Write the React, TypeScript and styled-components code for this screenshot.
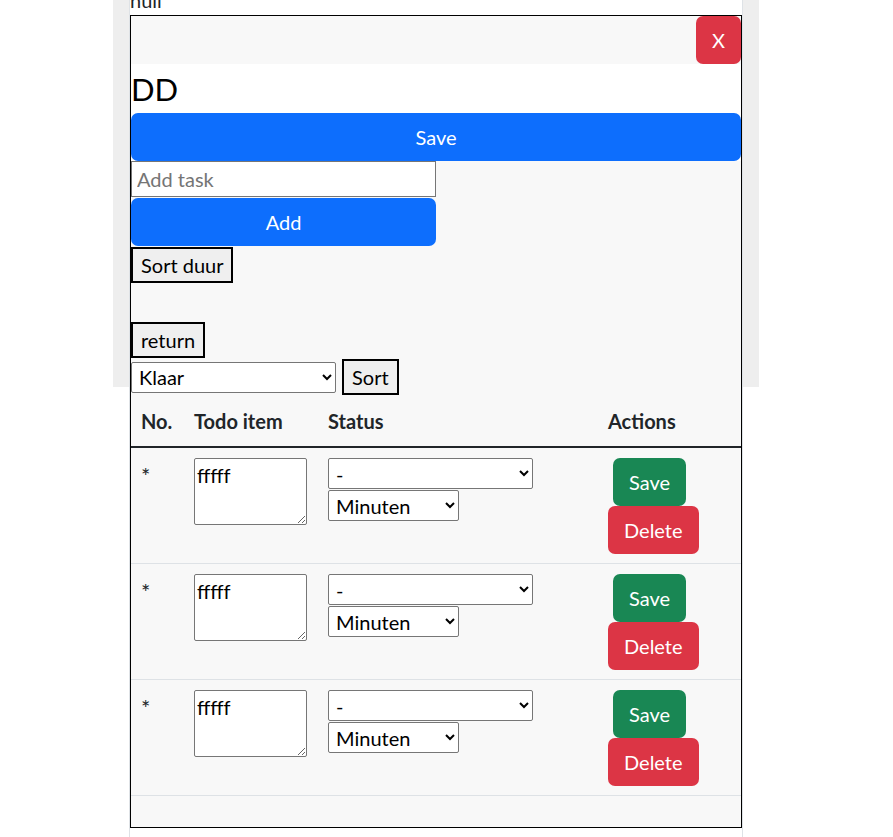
import styled, { createGlobalStyle } from 'styled-components';

const GlobalStyle = createGlobalStyle`
  html, body {
    margin: 0;
    padding: 0;
    background: #fff;
  }
  body {
    font-family: Lato, "Segoe UI", "Noto Sans", sans-serif;
    font-size: 20px;
    line-height: 1.5;
    color: #212529;
  }
`;

// grey page strip only reaches part way down; the card keeps going below it
const Backdrop = styled.div`
  margin: -15px 0 0 113px;
  width: 646px;
  box-sizing: border-box;
  padding: 0 16px;
  background: linear-gradient(#eeeeee, #eeeeee) top left / 100% 402px no-repeat;
`;

const Card = styled.div`
  background: #fff;
  border-left: 1px solid #dee2e6;
  border-right: 1px solid #dee2e6;
`;

const NullText = styled.div`
  height: 30px;
  line-height: 30px;
`;

const Modal = styled.div`
  border: 1px solid #000;
`;

const Header = styled.div`
  display: flex;
  justify-content: flex-end;
  background: #f8f8f8;
`;

const Btn = styled.button<{ $tone: 'primary' | 'success' | 'danger'; $width?: string }>`
  display: block;
  box-sizing: border-box;
  width: ${(p) => p.$width || 'auto'};
  height: 48px;
  padding: 0 15px;
  border: 1px solid transparent;
  border-radius: 7px;
  font: inherit;
  line-height: 30px;
  color: #fff;
  cursor: pointer;
  background: ${(p) =>
    p.$tone === 'primary' ? '#0d6efd' : p.$tone === 'success' ? '#198754' : '#dc3545'};
`;

const TitleBlock = styled.div`
  background: #fff;
`;

const Title = styled.h3`
  margin: 0 0 6px;
  padding-top: 8px;
  font-size: 31px;
  font-weight: 400;
  line-height: 35px;
  color: #000;
`;

const Body = styled.div`
  background: #f8f8f8;
  padding-bottom: 31px;
`;

const TaskInput = styled.input`
  display: block;
  box-sizing: border-box;
  width: 305px;
  height: 36px;
  margin: 0;
  padding: 1px 5px;
  border: 1px solid #767676;
  font: inherit;
  background: #fff;
  &::placeholder {
    color: #757575;
  }
`;

const Spaced = styled.div<{ $top: number }>`
  margin-top: ${(p) => p.$top}px;
`;

const PlainButton = styled.button`
  box-sizing: border-box;
  height: 36px;
  padding: 0 8px;
  border: 2px solid #000;
  background: #efefef;
  color: #000;
  font: inherit;
  line-height: 30px;
`;

const FilterRow = styled.div`
  display: flex;
  align-items: center;
  gap: 6px;
  height: 38px;
`;

const NativeSelect = styled.select<{ $w: number }>`
  display: block;
  box-sizing: border-box;
  width: ${(p) => p.$w}px;
  height: 31px;
  padding: 0 3px;
  border: 1px solid #767676;
  border-radius: 2px;
  background: #fff;
  color: #000;
  font: inherit;
`;

const Table = styled.table`
  width: 100%;
  border-collapse: collapse;
  table-layout: fixed;
  color: #212529;
`;

const Th = styled.th<{ $w?: number }>`
  width: ${(p) => (p.$w ? `${p.$w}px` : 'auto')};
  box-sizing: border-box;
  padding: 10px;
  text-align: left;
  font-weight: 700;
  line-height: 30px;
  border-bottom: 2px solid #212529;
`;

const Td = styled.td`
  padding: 10px 10px 9px;
  vertical-align: top;
  line-height: 30px;
  border-bottom: 1px solid #dee2e6;
`;

const Star = styled.span`
  display: inline-block;
  padding-top: 3px;
  font-size: 22px;
`;

const Note = styled.textarea`
  display: block;
  box-sizing: border-box;
  width: 113px;
  height: 67px;
  padding: 3px 2px;
  border: 1px solid #767676;
  border-radius: 2px;
  font: inherit;
  line-height: 1.3;
  color: #000;
  background: #fff;
`;

const Stack = styled.div`
  display: flex;
  flex-direction: column;
  gap: 1px;
`;

const ActionCol = styled.div`
  display: flex;
  flex-direction: column;
  align-items: flex-start;
`;

const SaveSmall = styled(Btn)`
  margin-left: 5px;
`;

const rows = [1, 2, 3];

export default function App() {
  return (
    <>
      <GlobalStyle />
      <Backdrop>
        <Card>
          <NullText>null</NullText>
          <Modal>
            <Header>
              <Btn $tone="danger">X</Btn>
            </Header>
            <TitleBlock>
              <Title>DD</Title>
              <Btn $tone="primary" $width="100%">Save</Btn>
            </TitleBlock>
            <Body>
              <TaskInput placeholder="Add task" />
              <Spaced $top={1}>
                <Btn $tone="primary" $width="305px">Add</Btn>
              </Spaced>
              <Spaced $top={1}>
                <PlainButton>Sort duur</PlainButton>
              </Spaced>
              <Spaced $top={39}>
                <PlainButton>return</PlainButton>
              </Spaced>
              <FilterRow>
                <NativeSelect $w={205} defaultValue="Klaar">
                  <option>Klaar</option>
                  <option>Bezig</option>
                  <option>Niet begonnen</option>
                </NativeSelect>
                <PlainButton>Sort</PlainButton>
              </FilterRow>
              <Table>
                <thead>
                  <tr>
                    <Th $w={53}>No.</Th>
                    <Th $w={134}>Todo item</Th>
                    <Th $w={280}>Status</Th>
                    <Th>Actions</Th>
                  </tr>
                </thead>
                <tbody>
                  {rows.map((r) => (
                    <tr key={r}>
                      <Td>
                        <Star>*</Star>
                      </Td>
                      <Td>
                        <Note defaultValue="fffff" />
                      </Td>
                      <Td>
                        <Stack>
                          <NativeSelect $w={205} defaultValue="-">
                            <option>-</option>
                            <option>Klaar</option>
                            <option>Bezig</option>
                          </NativeSelect>
                          <NativeSelect $w={131} defaultValue="Minuten">
                            <option>Minuten</option>
                            <option>Uren</option>
                          </NativeSelect>
                        </Stack>
                      </Td>
                      <Td>
                        <ActionCol>
                          <SaveSmall $tone="success">Save</SaveSmall>
                          <Btn $tone="danger">Delete</Btn>
                        </ActionCol>
                      </Td>
                    </tr>
                  ))}
                </tbody>
              </Table>
            </Body>
          </Modal>
          <NullText>null</NullText>
        </Card>
      </Backdrop>
    </>
  );
}
